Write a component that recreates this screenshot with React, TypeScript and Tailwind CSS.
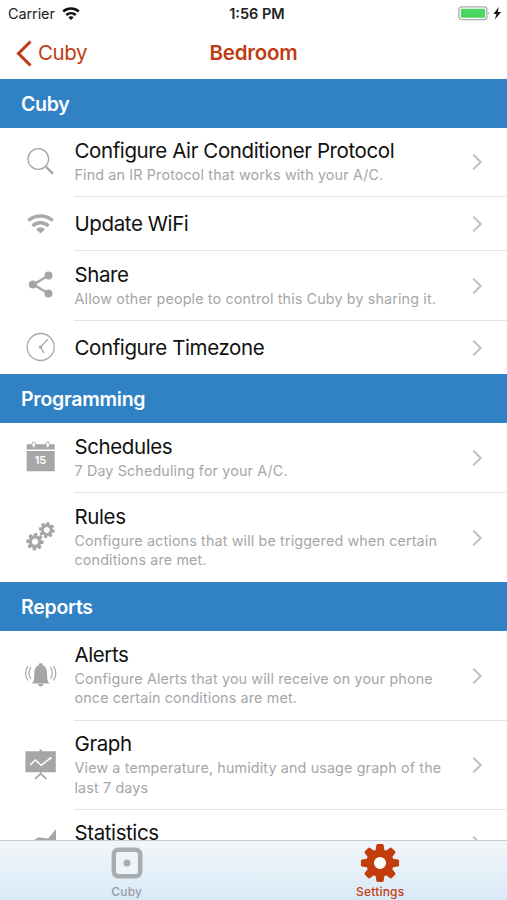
import type { ReactNode } from 'react'

type Item = {
  title: string
  detail?: string
  icon: ReactNode
  height: string
}

type Section = {
  name: string
  items: Item[]
}

const SearchIcon = () => (
  <svg width="32" height="32" viewBox="0 0 32 32" fill="none" stroke="#a6a6a6">
    <circle cx="13.3" cy="13" r="10.3" strokeWidth="1.3" />
    <path d="M20.3 20l1.8 1.8" strokeWidth="1.2" />
    <path d="M21.4 21.2l6.5 6.6" strokeWidth="2.4" />
  </svg>
)

const WifiIcon = () => (
  <svg width="32" height="32" viewBox="0 0 32 32" fill="none" stroke="#a9a9a9" strokeWidth="3.4">
    <path d="M3.3 13.5c7-6.1 17.4-6.1 24.4 0" />
    <path d="M7.5 18.9c4.400-4.200 11.600-4.200 16 0" />
    <path d="M11 22.300c2.400-2.300 6.600-2.300 9 0L15.500 26.500z" fill="#a9a9a9" stroke="none" />
  </svg>
)

const ShareIcon = () => (
  <svg width="32" height="32" viewBox="0 0 32 32" fill="#a6a6a6">
    <path d="M23.5 6.5L8.5 15.5l15 9" fill="none" stroke="#a6a6a6" strokeWidth="2.4" />
    <circle cx="23.5" cy="6.5" r="4" />
    <circle cx="7.8" cy="15.5" r="4" />
    <circle cx="23.5" cy="24.4" r="4" />
  </svg>
)

const ClockIcon = () => (
  <svg width="32" height="32" viewBox="0 0 32 32" fill="none" stroke="#a9a9a9" strokeWidth="1.3">
    <circle cx="15.7" cy="16" r="13.5" />
    <path d="M23 8.3L15.4 16l3.5 6" />
    <circle cx="15.4" cy="16" r="1.6" fill="#a6a6a6" stroke="none" />
  </svg>
)

const CalendarIcon = () => (
  <svg width="32" height="32" viewBox="0 0 32 32" fill="#a6a6a6">
    <path d="M1.7 3.3h28v5.3h-28zM1.7 10h28v20.3h-28z" />
    <ellipse cx="8.7" cy="3.8" rx="1.8" ry="2.9" fill="#fff" stroke="#a6a6a6" />
    <ellipse cx="22.7" cy="3.8" rx="1.8" ry="2.9" fill="#fff" stroke="#a6a6a6" />
    <text x="15.5" y="22.8" textAnchor="middle" fontFamily="Inter, sans-serif" fontSize="11" fontWeight="600" fill="#fff">15</text>
  </svg>
)

// eight-toothed cog centred on 0,0 with a radius of 10
const Cog = ({ hole = 4 }: { hole?: number }) => (
  <>
    {[0, 45, 90, 135, 180, 225, 270, 315].map((angle) => (
      <path key={angle} transform={`rotate(${angle})`} d="M-2.4-6L-1.9-9.4Q-1.8-10-1.2-10H1.2Q1.8-10 1.9-9.4L2.4-6z" />
    ))}
    <circle r={(7.2 + hole) / 2} fill="none" stroke="currentColor" strokeWidth={7.2 - hole} />
  </>
)

const RulesIcon = () => (
  <svg width="32" height="32" viewBox="0 0 32 32" fill="currentColor" className="text-[#a6a6a6]">
    <g transform="translate(21.8 9) rotate(10) scale(0.8)"><Cog hole={3.8} /></g>
    <g transform="translate(10 20.7) rotate(5) scale(0.87)"><Cog hole={3.6} /></g>
  </svg>
)

const BellIcon = () => (
  <svg width="32" height="32" viewBox="0 0 32 32" fill="#a6a6a6">
    <circle cx="15.7" cy="6" r="2" />
    <path d="M6.7 24.5c2.3-1.7 2.6-4.6 2.6-9.3 0-6 2-9.2 6.400-9.200s6.400 3.200 6.400 9.200c0 4.700.3 7.600 2.600 9.300z" />
    <path d="M12.900 25.100h5.600c-.4 1.600-1.400 2.300-2.800 2.300s-2.400-.7-2.800-2.300z" />
    <g fill="none" stroke="#a6a6a6" strokeWidth="1.2">
      <path d="M6 8q-4 6 0 12M2.900 7q-4.600 7.200 0 14.400M25.400 8q4 6 0 12M28.500 7q4.600 7.200 0 14.400" />
    </g>
  </svg>
)

const GraphIcon = () => (
  <svg width="32" height="32" viewBox="0 0 32 32" fill="#a6a6a6">
    <path d="M14.5.4h2.4V3h-2.400zM.4 2.200h30.400v21H.4z" />
    <path d="M5.1 16l5.200-5 6 5.300 8.800-7" fill="none" stroke="#fff" strokeWidth="1.5" />
    <circle cx="25.3" cy="9.2" r="1.2" fill="#fff" />
    <path d="M15.7 23v2M10 29.800l5.700-4.900 5.700 4.900" fill="none" stroke="#a6a6a6" strokeWidth="1.7" />
  </svg>
)

const StatsIcon = () => (
  <svg width="32" height="32" viewBox="0 0 32 32" fill="#a6a6a6">
    <path d="M5 15.500L11 11.800c1.500-1.200 3-1.700 5-1.200l5.500.8c1.200.1 2-.4 2.900-1.500L31 2V31H5z" />
  </svg>
)

const Chevron = () => (
  <svg width="12" height="18" viewBox="0 0 12 18" fill="none" stroke="#c1c1c5" strokeWidth="2.1">
    <path d="M1.3 1.8L8.7 9l-7.400 7.200" />
  </svg>
)

const sections: Section[] = [
  {
    name: 'Cuby',
    items: [
      { title: 'Configure Air Conditioner Protocol', detail: 'Find an IR Protocol that works with your A/C.', icon: <SearchIcon />, height: 'h-[69px]' },
      { title: 'Update WiFi', icon: <WifiIcon />, height: 'h-[54px]' },
      { title: 'Share', detail: 'Allow other people to control this Cuby by sharing it.', icon: <ShareIcon />, height: 'h-[70px]' },
      { title: 'Configure Timezone', icon: <ClockIcon />, height: 'h-[53px]' },
    ],
  },
  {
    name: 'Programming',
    items: [
      { title: 'Schedules', detail: '7 Day Scheduling for your A/C.', icon: <CalendarIcon />, height: 'h-[70px]' },
      { title: 'Rules', detail: 'Configure actions that will be triggered when certain conditions are met.', icon: <RulesIcon />, height: 'h-[89px]' },
    ],
  },
  {
    name: 'Reports',
    items: [
      { title: 'Alerts', detail: 'Configure Alerts that you will receive on your phone once certain conditions are met.', icon: <BellIcon />, height: 'h-[90px]' },
      { title: 'Graph', detail: 'View a temperature, humidity and usage graph of the last 7 days', icon: <GraphIcon />, height: 'h-[89px]' },
      { title: 'Statistics', detail: '\u00a0', icon: <StatsIcon />, height: 'h-[67px]' },
    ],
  },
]

function Row({ item, last }: { item: Item; last: boolean }) {
  return (
    <div className={`flex shrink-0 ${item.height}`}>
      <div className="flex w-[74px] shrink-0 items-center pb-[2px] pl-[25px]">{item.icon}</div>
      <div className={`flex min-w-0 flex-1 items-center ${last ? '' : 'border-b border-[#e4e4e6]'}`}>
        <div className="w-[385px] pl-[0.5px]">
          <div className="text-[20.5px] leading-[25px] tracking-[-0.4px] text-[#111]">{item.title}</div>
          {item.detail && (
            <div className="w-[380px] pb-[1.5px] pt-[2px] text-[14.3px] leading-[19.5px] tracking-[0.15px] text-[#a6a6a8]">{item.detail}</div>
          )}
        </div>
        <div className="ml-[13px]">
          <Chevron />
        </div>
      </div>
    </div>
  )
}

function StatusBar() {
  return (
    <div className="grid h-[28px] grid-cols-3 items-center pl-2 pr-[5px] text-[14.5px] text-[#222]">
      <div className="flex items-center gap-[7px]">
        <span className="tracking-[-0.1px]">Carrier</span>
        <svg width="18" height="14" viewBox="0 0 18 14" fill="none" stroke="#111" strokeWidth="2.5">
          <path d="M1.2 4.500c4.500-4 11.100-4 15.600 0M4.200 8c2.800-2.400 6.800-2.400 9.600 0" />
          <path d="M6.3 10.200c1.600-1.300 3.800-1.300 5.400 0L9 13z" fill="#111" stroke="none" />
        </svg>
      </div>
      <span className="pl-[4px] text-center font-semibold">1:56 PM</span>
      <div className="flex items-center justify-end">
        <svg width="44" height="16" viewBox="0 0 44 16">
          <rect x="0.9" y="0.8" width="28" height="12.8" rx="2.8" fill="#fff" stroke="#a9adab" strokeWidth="1.3" />
          <rect x="2.8" y="2.7" width="24.3" height="9" rx="1" fill="#4cd662" />
          <path d="M30.2 5.100q1.800 2.100 0 4.300z" fill="#a9adab" />
          <path d="M40.7 1L35.500 7.900h3L36.800 13.500 43.200 5.900h-3.400z" fill="#111" />
        </svg>
      </div>
    </div>
  )
}

export default function App() {
  return (
    <div className="flex h-[900px] w-[507px] flex-col overflow-hidden bg-white font-['Inter',sans-serif]">
      <header className="h-[79px] shrink-0">
        <StatusBar />
        <div className="grid h-[50px] grid-cols-3 items-center text-[20.5px] text-[#bf3c12]">
          <button className="flex items-center gap-[6px] pl-4 text-left tracking-[-0.4px]">
            <svg width="16" height="27" viewBox="0 0 16 27" fill="none" stroke="currentColor" strokeWidth="3">
              <path d="M14.5 1.500L2.500 13.500l12 12" />
            </svg>
            Cuby
          </button>
          <h1 className="text-center font-semibold tracking-[-0.2px]">Bedroom</h1>
        </div>
      </header>

      <main className="flex min-h-0 flex-1 flex-col overflow-hidden">
        {sections.map((section) => (
          <section key={section.name} className="flex shrink-0 flex-col">
            <h2 className="flex h-[49px] items-center bg-[#3082c5] pl-[21px] pt-[2.5px] text-[19.5px] font-semibold tracking-[-0.25px] text-white">{section.name}</h2>
            {section.items.map((item, i) => (
              <Row key={item.title} item={item} last={i === section.items.length - 1} />
            ))}
          </section>
        ))}
      </main>

      <nav className="grid h-[60px] shrink-0 grid-cols-2 border-t border-[#c8cdd1] bg-gradient-to-b from-[#f2f6f9] to-[#d9eaf7] text-[12px] font-medium tracking-[0.2px]">
        <button className="flex flex-col items-center pt-[6px] text-[#979da2]">
          <svg width="32" height="32" viewBox="0 0 32 32" fill="none">
            <rect x="2.8" y="2.8" width="26.4" height="26.4" rx="4.5" fill="#f0f4f7" stroke="#a8adb1" strokeWidth="4.5" />
            <circle cx="16" cy="16" r="3.5" fill="#a8adb1" />
          </svg>
          <span className="mt-[5px] leading-[16px]">Cuby</span>
        </button>
        <button className="flex flex-col items-center pt-[2px] text-[#c33c0c]">
          <svg width="40" height="40" viewBox="-10.5 -10.5 21 21" fill="currentColor">
            <circle r="4" fill="#fff" />
            <Cog hole={3.2} />
          </svg>
          <span className="mt-px leading-[16px]">Settings</span>
        </button>
      </nav>
    </div>
  )
}
